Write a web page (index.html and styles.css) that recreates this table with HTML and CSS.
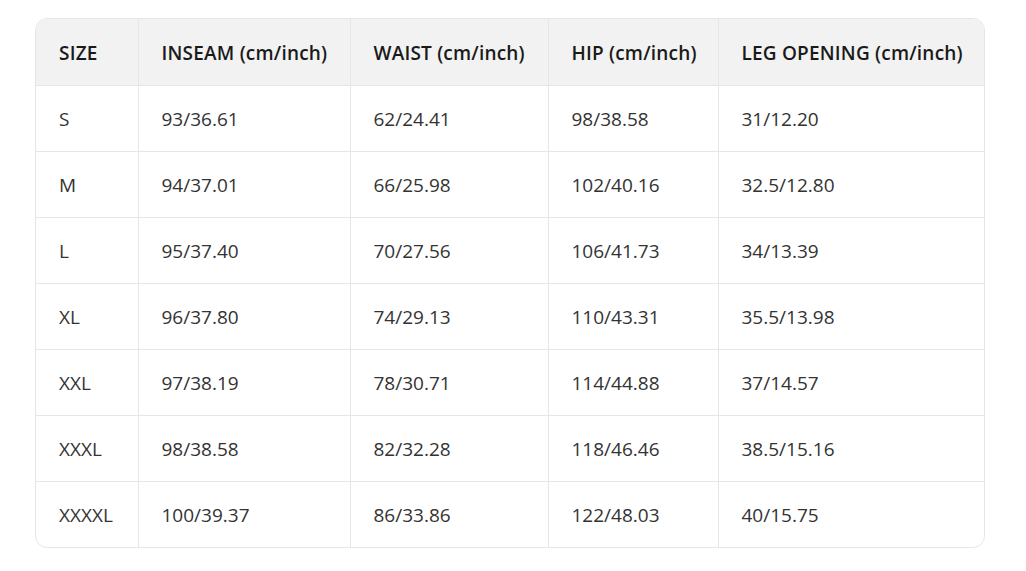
FILE: index.html
```html
<!DOCTYPE html>
<html>
<head>
<meta charset="utf-8">
<link rel="stylesheet" href="styles.css">
</head>
<body>
<div class="wrap">
<table class="size-table">
<colgroup>
<col class="c1"><col class="c2"><col class="c3"><col class="c4"><col class="c5">
</colgroup>
<thead>
<tr><th>SIZE</th><th>INSEAM (cm/inch)</th><th>WAIST (cm/inch)</th><th>HIP (cm/inch)</th><th>LEG OPENING (cm/inch)</th></tr>
</thead>
<tbody>
<tr><td>S</td><td>93/36.61</td><td>62/24.41</td><td>98/38.58</td><td>31/12.20</td></tr>
<tr><td>M</td><td>94/37.01</td><td>66/25.98</td><td>102/40.16</td><td>32.5/12.80</td></tr>
<tr><td>L</td><td>95/37.40</td><td>70/27.56</td><td>106/41.73</td><td>34/13.39</td></tr>
<tr><td>XL</td><td>96/37.80</td><td>74/29.13</td><td>110/43.31</td><td>35.5/13.98</td></tr>
<tr><td>XXL</td><td>97/38.19</td><td>78/30.71</td><td>114/44.88</td><td>37/14.57</td></tr>
<tr><td>XXXL</td><td>98/38.58</td><td>82/32.28</td><td>118/46.46</td><td>38.5/15.16</td></tr>
<tr><td>XXXXL</td><td>100/39.37</td><td>86/33.86</td><td>122/48.03</td><td>40/15.75</td></tr>
</tbody>
</table>
</div>
</body>
</html>
```

FILE: styles.css
```css
html, body {
  margin: 0;
  padding: 0;
  background: #ffffff;
}
body {
  padding: 18px 0 0 35px;
  font-family: "Open Sans", "Noto Sans", sans-serif;
}
.wrap {
  width: 948px;
  border: 1px solid #e6e6e6;
  border-radius: 12px;
  overflow: hidden;
}
.size-table {
  width: 100%;
  border-collapse: collapse;
  table-layout: fixed;
}
.c1 { width: 102px; }
.c2 { width: 212px; }
.c3 { width: 198px; }
.c4 { width: 170px; }
.c5 { width: auto; }
.size-table th,
.size-table td {
  height: 66px;
  padding: 2px 0 0 23px;
  text-align: left;
  border-right: 1px solid #e6e6e6;
  border-bottom: 1px solid #e6e6e6;
  font-size: 19px;
  box-sizing: border-box;
  white-space: nowrap;
}
.size-table th:last-child,
.size-table td:last-child {
  border-right: none;
}
.size-table tbody tr:last-child td {
  border-bottom: none;
}
.size-table th {
  background: #f2f2f2;
  color: #1a1a1a;
  font-weight: 600;
  letter-spacing: 0.2px;
}
.size-table td {
  color: #333333;
  font-weight: 400;
}
```
